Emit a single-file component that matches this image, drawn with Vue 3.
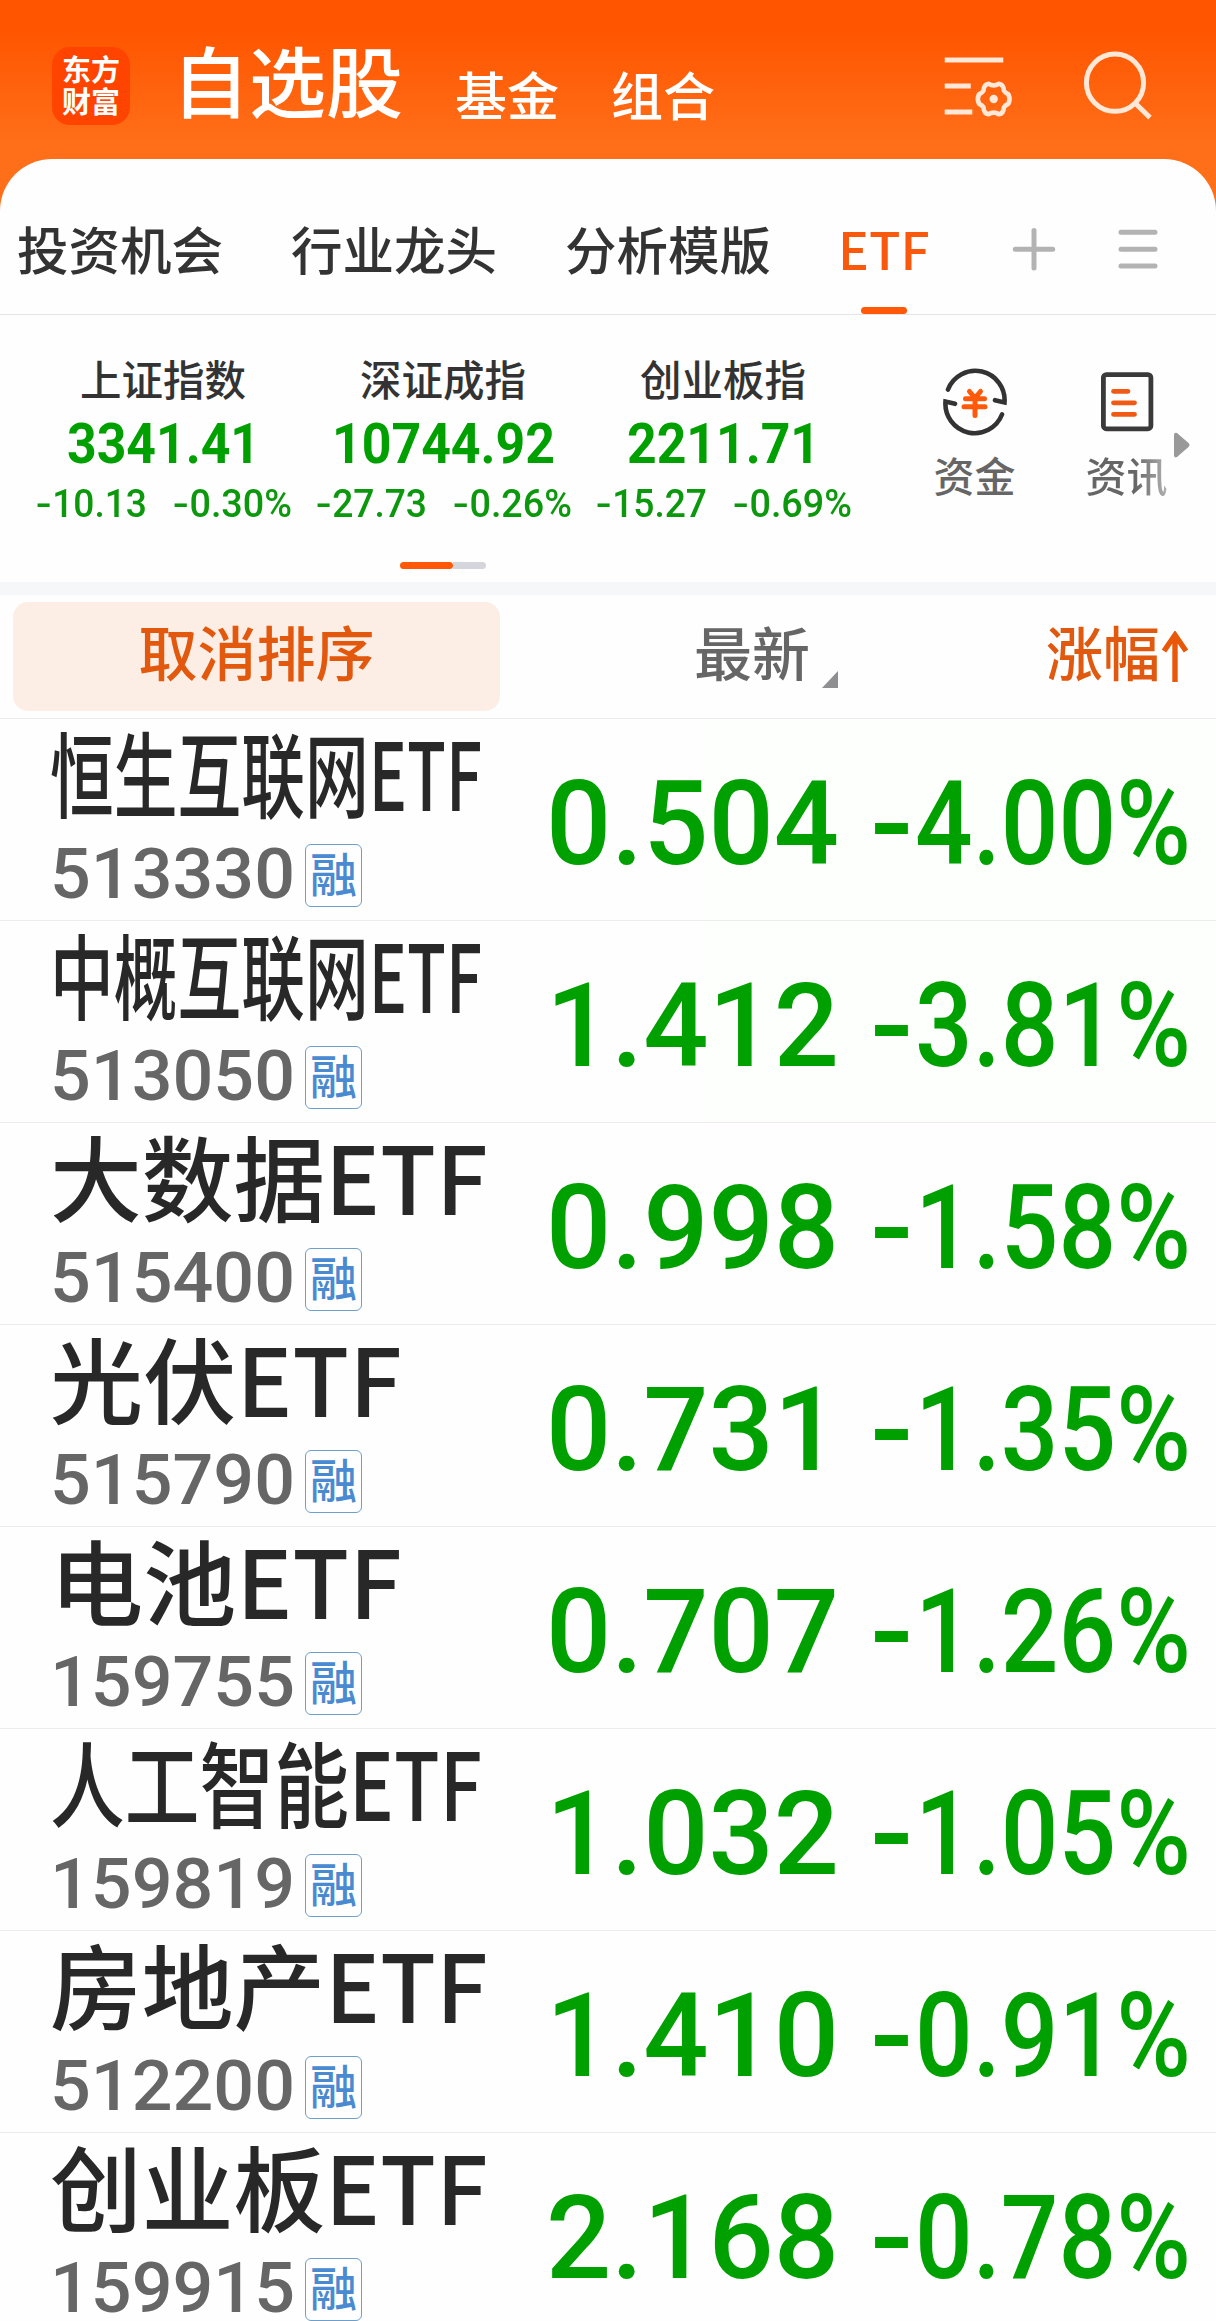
<script setup>
import { ref } from 'vue'

// tabs in the white panel
const tabs = ['投资机会', '行业龙头', '分析模版', 'ETF']
const activeTab = ref('ETF')

// market indexes, w = width of the value in px
const indexes = [
  { name: '上证指数', value: '3341.41', w: 193, diff: '10.13', percent: '0.30%' },
  { name: '深证成指', value: '10744.92', w: 223, diff: '27.73', percent: '0.26%' },
  { name: '创业板指', value: '2211.71', w: 193, diff: '15.27', percent: '0.69%' },
]

// watch list, long names are squeezed to w
const stocks = ref([
  { name: '恒生互联网ETF', w: 432, code: '513330', price: '0.504', change: '4.00%' },
  { name: '中概互联网ETF', w: 432, code: '513050', price: '1.412', change: '3.81%' },
  { name: '大数据ETF', w: 438, code: '515400', price: '0.998', change: '1.58%' },
  { name: '光伏ETF', w: 352, code: '515790', price: '0.731', change: '1.35%' },
  { name: '电池ETF', w: 352, code: '159755', price: '0.707', change: '1.26%' },
  { name: '人工智能ETF', w: 432, code: '159819', price: '1.032', change: '1.05%' },
  { name: '房地产ETF', w: 438, code: '512200', price: '1.410', change: '0.91%' },
  { name: '创业板ETF', w: 438, code: '159915', price: '2.168', change: '0.78%' },
])

// v-fit="width": scales the text horizontally until it takes exactly that width
const vFit = {
  mounted(el, { value }) {
    const natural = el.getBoundingClientRect().width
    el.style.transform = `scaleX(${value / natural})`
    el.style.marginRight = `${value - natural}px`
  },
}
</script>

<template>
  <div class="app">
    <header class="header">
      <div class="logo">
        <span>东方</span>
        <span>财富</span>
      </div>
      <h1 class="title">自选股</h1>
      <a class="link">基金</a>
      <a class="link">组合</a>
      <div class="header-icons">
        <svg width="76" height="70" viewBox="940 48 76 70" fill="none" stroke="#ffe8d8" stroke-width="5">
          <path d="M944.7 60H1003.3M944.7 86H970.7M944.7 112H972.3" />
          <path
            stroke-width="4.6"
            stroke-linejoin="round"
            d="M988.5 83.7Q993.7 87 998.9 83.7Q1003.6 84.4 1003.9 90.6Q1005 92.6 1008.4 94.4Q1010.8 99 1008.4 103.6Q1005 105.4 1003.9 107.400Q1003.6 113.6 998.9 114.300Q993.7 111 988.5 114.300Q983.8 113.6 983.5 107.400Q982.4 105.4 979 103.6Q976.6 99 979 94.4Q982.4 92.6 983.5 90.6Q983.8 84.4 988.5 83.7Z"
          />
          <circle cx="993.7" cy="99" r="4.2" fill="#ffe8d8" stroke="none" />
        </svg>
        <svg width="72" height="72" viewBox="1082 48 72 72" fill="none" stroke="#ffe8d8" stroke-width="5">
          <circle cx="1115" cy="82.7" r="28.6" />
          <path d="M1135 103L1150 117.6" />
        </svg>
      </div>
    </header>

    <main class="panel">
      <nav class="tabs">
        <a
          v-for="tab in tabs"
          :key="tab"
          class="tab"
          :class="{ active: tab === activeTab }"
          @click="activeTab = tab"
        >
          {{ tab }}
        </a>
        <svg class="tab-icons" width="150" height="50" viewBox="1010 224 150 50" fill="none" stroke="#b3b3b3" stroke-width="5" stroke-linecap="round">
          <path d="M1034 230.5V268M1015.3 249.3H1052.7" />
          <path d="M1121 232.3H1155M1121 249.3H1155M1121 266H1155" />
        </svg>
      </nav>

      <section class="market">
        <div class="indexes">
          <div v-for="item in indexes" :key="item.name" class="index">
            <div class="index-name">{{ item.name }}</div>
            <div class="index-value"><span v-fit="item.w" class="fit">{{ item.value }}</span></div>
            <div class="index-change">
              <span v-fit="112" class="fit"><i>-</i>{{ item.diff }}</span>
              <span v-fit="120" class="fit"><i>-</i>{{ item.percent }}</span>
            </div>
          </div>
        </div>
        <div class="shortcuts">
          <a class="shortcut">
            <svg width="68" height="68" viewBox="941 368 68 68" fill="none" stroke="#333" stroke-width="4.6" stroke-linecap="round">
              <path d="M948 389.5A29.3 29.3 0 0 1 1004.5 402.5L995 400.2" />
              <path d="M1002 414.5A29.3 29.3 0 0 1 945.5 401.5L955 403.8" />
              <path stroke="#ff5a0a" stroke-width="5" d="M969.5 391.500L975 398L980.5 391.5M975 398V415.5M965.500 398.7H984.5M964 406.8H985" />
            </svg>
            <span>资金</span>
          </a>
          <a class="shortcut news">
            <svg width="68" height="68" viewBox="1093 368 68 68" fill="none" stroke="#3a3a3a" stroke-width="4.8" stroke-linecap="round">
              <rect x="1103.4" y="374.6" width="47.5" height="54.2" rx="3" />
              <path stroke="#f05a14" d="M1113.5 391.3H1128M1113.5 402.8H1134.5M1113.5 414.3H1134.5" />
            </svg>
            <span>资讯</span>
          </a>
          <svg class="more" width="18" height="28" viewBox="0 0 18 28">
            <path fill="#999" d="M1 4Q1 1 4 2L15.5 12Q17.5 14 15.5 16L4 26Q1 27.5 1 24Z" />
          </svg>
        </div>
      </section>
      <div class="pager"><span></span></div>

      <div class="table-head">
        <button class="cancel-sort">取消排序</button>
        <div class="latest">
          最新
          <svg width="16" height="17" viewBox="0 0 16 17"><path fill="#8e8e93" d="M16 0V17H0Z" /></svg>
        </div>
        <div class="change-head">
          <span v-fit="114" class="fit">涨幅</span>
          <svg width="26" height="52" viewBox="0 0 26 52" fill="none" stroke="#e85808" stroke-width="5.4">
            <path d="M13 51V4M2 20L13 4L24 20" />
          </svg>
        </div>
      </div>

      <ul class="stocks">
        <li v-for="stock in stocks" :key="stock.code" class="stock">
          <div class="info">
            <div class="name"><span v-fit="stock.w" class="fit">{{ stock.name }}</span></div>
            <div class="code">
              <span v-fit="245" class="fit">{{ stock.code }}</span>
              <em class="badge">融</em>
            </div>
          </div>
          <div class="price"><span v-fit="293" class="fit">{{ stock.price }}</span></div>
          <div class="percent"><span v-fit="323" class="fit"><i>-</i>{{ stock.change }}</span></div>
        </li>
      </ul>
    </main>
  </div>
</template>

<style>
body {
  margin: 0;
  background: #fefefe;
}
</style>

<style scoped>
* {
  box-sizing: border-box;
}
.app {
  width: 1216px;
  height: 2321px;
  overflow: hidden;
  background: linear-gradient(#ff5500 0, #ff5500 30px, #ff6e18 140px, #ff6e18 220px);
  font-family: 'Noto Sans CJK SC', sans-serif;
  font-weight: 500;
  white-space: nowrap;
}
.fit {
  display: inline-block;
  flex-shrink: 0;
  transform-origin: left center;
}
i {
  font-family: Inter, sans-serif;
  font-style: normal;
}

/* header */
.header {
  display: flex;
  align-items: flex-start;
  height: 159px;
  padding: 47px 62px 0 52px;
  color: #fff;
}
.logo {
  display: flex;
  flex-direction: column;
  align-items: center;
  width: 78px;
  height: 78px;
  padding-top: 5px;
  border-radius: 18px;
  background: #ff4400;
  font-size: 29px;
  font-weight: 700;
  line-height: 32px;
}
.title {
  margin: -8px 0 0 42px;
  font-size: 77px;
  font-weight: 500;
  line-height: 80px;
}
.link {
  margin: 19px 0 0 52px;
  font-size: 52px;
  line-height: 56px;
}
.header-icons {
  display: flex;
  gap: 66px;
  margin: 1px 0 0 auto;
}

/* tabs */
.panel {
  height: 2162px;
  border-radius: 52px 52px 0 0;
  background: #fefefe;
}
.tabs {
  display: flex;
  align-items: center;
  gap: 68px;
  height: 156px;
  padding: 0 56px 0 17px;
  border-bottom: 1px solid #e4e4e4;
}
.tab {
  display: flex;
  flex-direction: column;
  align-items: center;
  height: 155px;
  padding-top: 59px;
  color: #333;
  font-size: 51.5px;
  line-height: 60px;
}
.tab.active {
  margin-left: -1px;
  color: #f8590d;
}
.tab.active::after {
  content: '';
  width: 46px;
  height: 7px;
  margin-top: 29px;
  border-radius: 4px;
  background: #ff5808;
}
.tab-icons {
  margin: 24px 0 0 auto;
}

/* indexes */
.market {
  display: flex;
  height: 247px;
}
.indexes {
  display: flex;
  padding-left: 23px;
}
.index {
  width: 280px;
  padding-top: 38px;
  text-align: center;
}
.index-name {
  color: #333;
  font-size: 41.5px;
  line-height: 50px;
}
.index-value {
  margin-top: 11px;
  color: #00a000;
  font-family: Roboto, sans-serif;
  font-size: 55px;
  font-weight: 700;
  line-height: 60px;
}
.index-change {
  display: flex;
  justify-content: center;
  gap: 25px;
  margin-top: 8px;
  color: #0c980c;
  font-family: Roboto, sans-serif;
  font-size: 38px;
  line-height: 42px;
}
.shortcuts {
  display: flex;
  padding: 53px 0 0 71px;
}
.shortcut {
  display: flex;
  flex-direction: column;
  align-items: center;
  gap: 10px;
  width: 81px;
  color: #666;
  font-size: 41px;
  line-height: 56px;
}
.news {
  margin-left: 71px;
}
.news span {
  background: linear-gradient(90deg, #666 60%, #b4b4b4);
  background-clip: text;
  color: transparent;
}
.more {
  margin: 63px 0 0 6px;
}
.pager {
  height: 33px;
  padding-left: 400px;
  border-bottom: 13px solid #f6f7f9;
}
.pager::after {
  content: '';
  display: inline-block;
  width: 33px;
  height: 7px;
  border-radius: 0 4px 4px 0;
  background: #d5d6dc;
  vertical-align: top;
}
.pager span {
  display: inline-block;
  width: 53px;
  height: 7px;
  border-radius: 4px;
  background: #ff5808;
  vertical-align: top;
}

/* table */
.table-head {
  display: flex;
  height: 124px;
  padding: 7px 28px 0 13px;
  border-bottom: 1px solid #ececec;
}
.cancel-sort {
  width: 487px;
  height: 109px;
  padding: 0 0 11px;
  border: none;
  border-radius: 15px;
  background: #fdeee5;
  color: #e2580c;
  font: inherit;
  font-size: 59px;
  line-height: 98px;
}
.latest {
  display: flex;
  gap: 12px;
  margin-left: 194px;
  color: #666;
  font-size: 58px;
  line-height: 98px;
}
.latest svg {
  margin-top: 69px;
}
.change-head {
  display: flex;
  gap: 2px;
  margin-left: auto;
  color: #e0590f;
  font-size: 59px;
  line-height: 98px;
}
.change-head svg {
  margin-top: 29px;
}
.stocks {
  margin: 0;
  padding: 0;
  list-style: none;
}
.stock {
  display: grid;
  grid-template-columns: 450px 339px 352px;
  height: 202px;
  padding-left: 50px;
  border-bottom: 1px solid #ececec;
}
/* biggest losers */
.stock:nth-child(-n + 2) {
  background: linear-gradient(90deg, transparent 703px, #fcfffb 703px);
}
.name {
  height: 111px;
  color: #282828;
  font-size: 93px;
  line-height: 104px;
}
.code {
  display: flex;
  margin-top: 14px;
  color: #666;
  font-family: Roboto, sans-serif;
  font-size: 71px;
  line-height: 60px;
}
.badge {
  width: 57px;
  height: 63px;
  margin-left: 10px;
  border: 1.5px solid #6c9fcb;
  border-radius: 6px;
  color: #4a8ad0;
  font-family: 'Noto Sans CJK SC', sans-serif;
  font-size: 47px;
  font-style: normal;
  line-height: 53px;
  text-align: center;
}
.price,
.percent {
  display: flex;
  justify-content: flex-end;
  color: #00a000;
  font-family: Roboto, sans-serif;
  font-size: 117px;
  line-height: 206px;
}
.price {
  line-height: 211px;
}
</style>
